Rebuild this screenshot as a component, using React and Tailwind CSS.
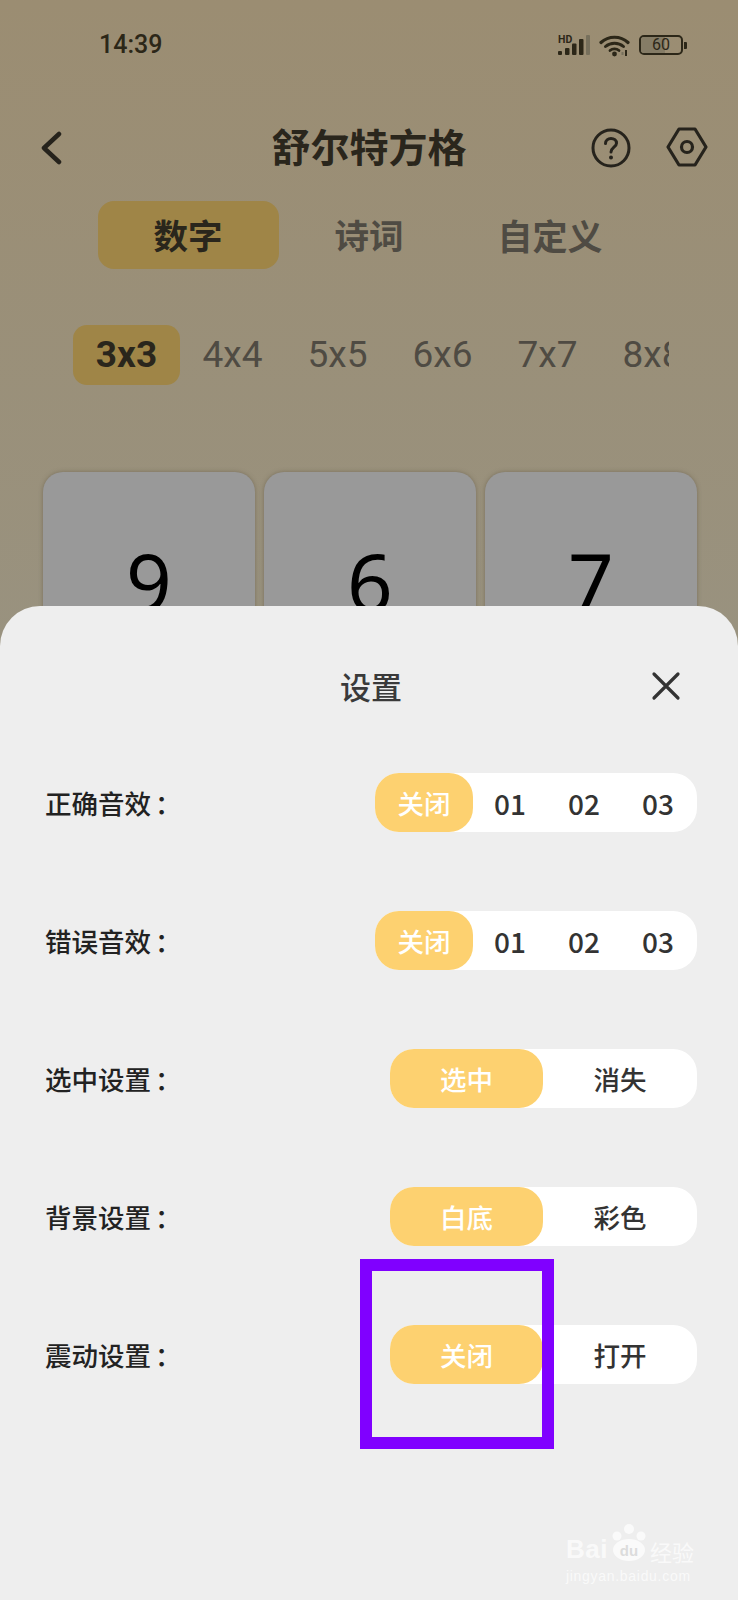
const cjk = { fontFamily: '"Noto Sans CJK SC", "Noto Sans", sans-serif' };

function SignalIcon() {
  return (
    <svg width="34" height="22" viewBox="0 0 34 22" className="block">
      <text x="1" y="8.5" fontSize="10.5" fontWeight="700" fill="#2c2718" fontFamily="Roboto, sans-serif">HD</text>
      <rect x="1" y="17" width="4" height="4" rx="1" fill="#2c2718" />
      <rect x="8" y="14" width="4.5" height="7" rx="1" fill="#2c2718" />
      <rect x="15" y="9.5" width="4.5" height="11.5" rx="1" fill="#2c2718" />
      <rect x="22" y="5" width="4.5" height="16" rx="1" fill="#2c2718" />
      <rect x="29" y="1" width="4" height="20" rx="1" fill="#77705c" />
    </svg>
  );
}

function WifiIcon() {
  return (
    <svg width="32" height="24" viewBox="0 0 32 24" fill="none" className="block">
      <path d="M2 9.5C9.5 2.5 21.5 2.5 29 9.5" stroke="#2c2718" strokeWidth="3.2" strokeLinecap="round" />
      <path d="M6.5 13.5C11.5 9 19.5 9 24.5 13.5" stroke="#2c2718" strokeWidth="3" strokeLinecap="round" />
      <path d="M11 17.5C13.5 15.3 17.5 15.3 20 17.5" stroke="#2c2718" strokeWidth="2.8" strokeLinecap="round" />
      <circle cx="15.5" cy="21" r="2.4" fill="#2c2718" />
      <rect x="26" y="17" width="2" height="6" fill="#2c2718" />
      <rect x="22.5" y="19" width="2" height="3" fill="#77705c" />
    </svg>
  );
}

function Battery() {
  return (
    <div className="flex items-center gap-[1px]">
      <div className="w-[44px] h-[20px] rounded-[5px] border-2 border-[#2c2718] flex items-center overflow-hidden relative">
        <div className="w-[60%] h-full bg-[#857c66]" />
        <span className="absolute inset-0 flex items-center justify-center text-[16px] leading-none text-[#2c2718]" style={{ fontFamily: 'Roboto, sans-serif' }}>60</span>
      </div>
      <div className="w-[3px] h-[7px] rounded-r-[1px] bg-[#2c2718]" />
    </div>
  );
}

function Segmented({ active, options, activeWidth, width, extra, optionText }) {
  return (
    <div className={`flex h-[59px] bg-white rounded-[24px] ${width} ${extra}`}>
      <div className={`${activeWidth} shrink-0 h-full bg-[#fdd170] rounded-[24px] flex items-center justify-center text-white text-[26.5px] font-medium`}>
        {active}
      </div>
      {options.map((o) => (
        <div key={o} className={`flex-1 flex items-center justify-center text-[#333333] font-medium ${optionText}`}>{o}</div>
      ))}
    </div>
  );
}

const rows = [
  { label: '正确音效', active: '关闭', options: ['01', '02', '03'] },
  { label: '错误音效', active: '关闭', options: ['01', '02', '03'] },
  { label: '选中设置', active: '选中', options: ['消失'] },
  { label: '背景设置', active: '白底', options: ['彩色'] },
  { label: '震动设置', active: '关闭', options: ['打开'] },
];

export default function App() {
  return (
    <div className="relative w-[738px] h-[1600px] overflow-hidden flex flex-col bg-linear-to-b from-[#9b8d72] to-[#99927f] to-40%" style={cjk}>
      <div className="h-[606px] shrink-0 overflow-hidden">
        {/* status bar */}
        <div className="h-[90px] flex items-center justify-between pl-[99px] pr-[51px]">
          <span className="text-[25px] font-medium text-[#2c2718]" style={{ fontFamily: 'Roboto, sans-serif' }}>14:39</span>
          <div className="flex items-center gap-[8px]">
            <SignalIcon />
            <WifiIcon />
            <Battery />
          </div>
        </div>

        {/* nav */}
        <div className="mt-[18px] h-[80px] grid grid-cols-[1fr_auto_1fr] items-center px-[30px]">
          <svg width="22" height="34" viewBox="0 0 22 34" fill="none" className="block ml-[10px]">
            <path d="M19 3L4 17L19 31" stroke="#26231c" strokeWidth="4.5" strokeLinecap="round" strokeLinejoin="round" />
          </svg>
          <span className="text-[39px] font-bold text-[#2a261c] leading-none mb-[6px]">舒尔特方格</span>
          <div className="flex items-center justify-end gap-[35px]">
            <svg width="40" height="40" viewBox="0 0 40 40" fill="none" className="block">
              <circle cx="20" cy="20" r="18" stroke="#26231c" strokeWidth="3" />
              <path d="M14.5 15.5C14.5 12.3 17 10.5 20 10.5C23 10.5 25.5 12.3 25.5 15.2C25.5 19 20 19.5 20 24" stroke="#26231c" strokeWidth="3" strokeLinecap="round" />
              <circle cx="20" cy="29.5" r="2" fill="#26231c" />
            </svg>
            <svg width="42" height="40" viewBox="0 0 42 40" fill="none" className="block -mt-[3px]">
              <path d="M13 2H29L40 20L29 38H13L2 20Z" stroke="#26231c" strokeWidth="3.2" strokeLinejoin="round" />
              <circle cx="21" cy="20" r="5.5" stroke="#26231c" strokeWidth="3.2" />
            </svg>
          </div>
        </div>

        {/* tabs */}
        <div className="mt-[13px] flex justify-center">
          <div className="w-[181px] h-[68px] rounded-[16px] bg-[#9f8547] flex items-center justify-center text-[34.5px] font-bold text-[#2a261c]">数字</div>
          <div className="w-[181px] h-[68px] flex items-center justify-center text-[34.5px] font-bold text-[#4f4b43]">诗词</div>
          <div className="w-[181px] h-[68px] flex items-center justify-center text-[35px] font-bold text-[#4f4b43]">自定义</div>
        </div>

        {/* sizes */}
        <div className="mt-[56px] ml-[73px] w-[596px] h-[60px] flex overflow-hidden text-[37px] text-[#4f4b43]" style={{ fontFamily: 'Roboto, sans-serif' }}>
          <div className="w-[107px] shrink-0 rounded-[14px] bg-[#9f8547] flex items-center justify-center font-bold text-[#2a261c]">3x3</div>
          {['4x4', '5x5', '6x6', '7x7', '8x8'].map((t) => (
            <div key={t} className="w-[105px] shrink-0 flex items-center justify-center">{t}</div>
          ))}
        </div>

        {/* cards */}
        <div className="mt-[87px] pl-[43px] pr-[41px] grid grid-cols-3 gap-[9px]">
          {['9', '6', '7'].map((n) => (
            <div key={n} className="h-[212px] pt-[6px] rounded-[20px] bg-[#999999] shadow-[0_0_4px_rgba(90,80,60,0.5)] flex items-center justify-center text-black text-[80px] leading-none" style={{ fontFamily: '"Noto Sans", sans-serif' }}>
              {n}
            </div>
          ))}
        </div>
      </div>

      {/* sheet */}
      <div className="flex-1 bg-[#eeeeee] rounded-t-[40px] pl-[45px] pr-[41px] pt-[40px]">
        <div className="relative h-[80px] flex items-center justify-center text-[31px] font-medium text-[#3a3a3a]">
          设置
          <svg width="30" height="30" viewBox="0 0 30 30" fill="none" className="absolute right-[16px] top-[25px] block">
            <path d="M3 3L27 27M27 3L3 27" stroke="#333333" strokeWidth="3.2" strokeLinecap="round" />
          </svg>
        </div>
        <div className="mt-[47px] flex flex-col gap-[79px]">
          {rows.map((r) => (
            <div key={r.label} className="flex items-center justify-between h-[59px]">
              <span className="text-[26.5px] font-medium text-[#222222]">
                {r.label}
                <span className="ml-[4px]">：</span>
              </span>
              {r.options.length > 1 ? (
                <Segmented active={r.active} options={r.options} activeWidth="w-[98px]" width="w-[322px]" extra="pr-[2px]" optionText="text-[28px]" />
              ) : (
                <Segmented active={r.active} options={r.options} activeWidth="w-[153px]" width="w-[307px]" extra="" optionText="text-[26.5px]" />
              )}
            </div>
          ))}
        </div>
      </div>

      {/* annotation */}
      <div className="absolute left-[360px] top-[1259px] w-[194px] h-[190px] border-[12px] border-[#8000ff]" />

      {/* watermark */}
      <div className="absolute left-[566px] top-[1520px] w-[132px] h-[62px] text-white/70" style={{ fontFamily: '"Liberation Sans", sans-serif' }}>
        <div className="flex items-end h-[42px]">
          <span className="text-[26px] font-bold leading-none tracking-[0.5px]">Bai</span>
          <svg width="42" height="40" viewBox="0 0 42 40" className="block">
            <circle cx="21" cy="7" r="5" fill="#ffffff" fillOpacity="0.7" />
            <circle cx="9" cy="14" r="4.5" fill="#ffffff" fillOpacity="0.7" />
            <circle cx="33" cy="14" r="4.5" fill="#ffffff" fillOpacity="0.7" />
            <ellipse cx="21" cy="28" rx="16" ry="11" fill="#ffffff" fillOpacity="0.7" />
            <text x="21" y="34" textAnchor="middle" fontSize="15" fontWeight="700" fill="#dcdcdc" fontFamily="Liberation Sans, sans-serif">du</text>
          </svg>
          <span className="text-[22px] leading-none" style={cjk}>经验</span>
        </div>
        <div className="text-[14px] leading-none mt-[7px] tracking-[0.7px] whitespace-nowrap">jingyan.baidu.com</div>
      </div>
    </div>
  );
}
